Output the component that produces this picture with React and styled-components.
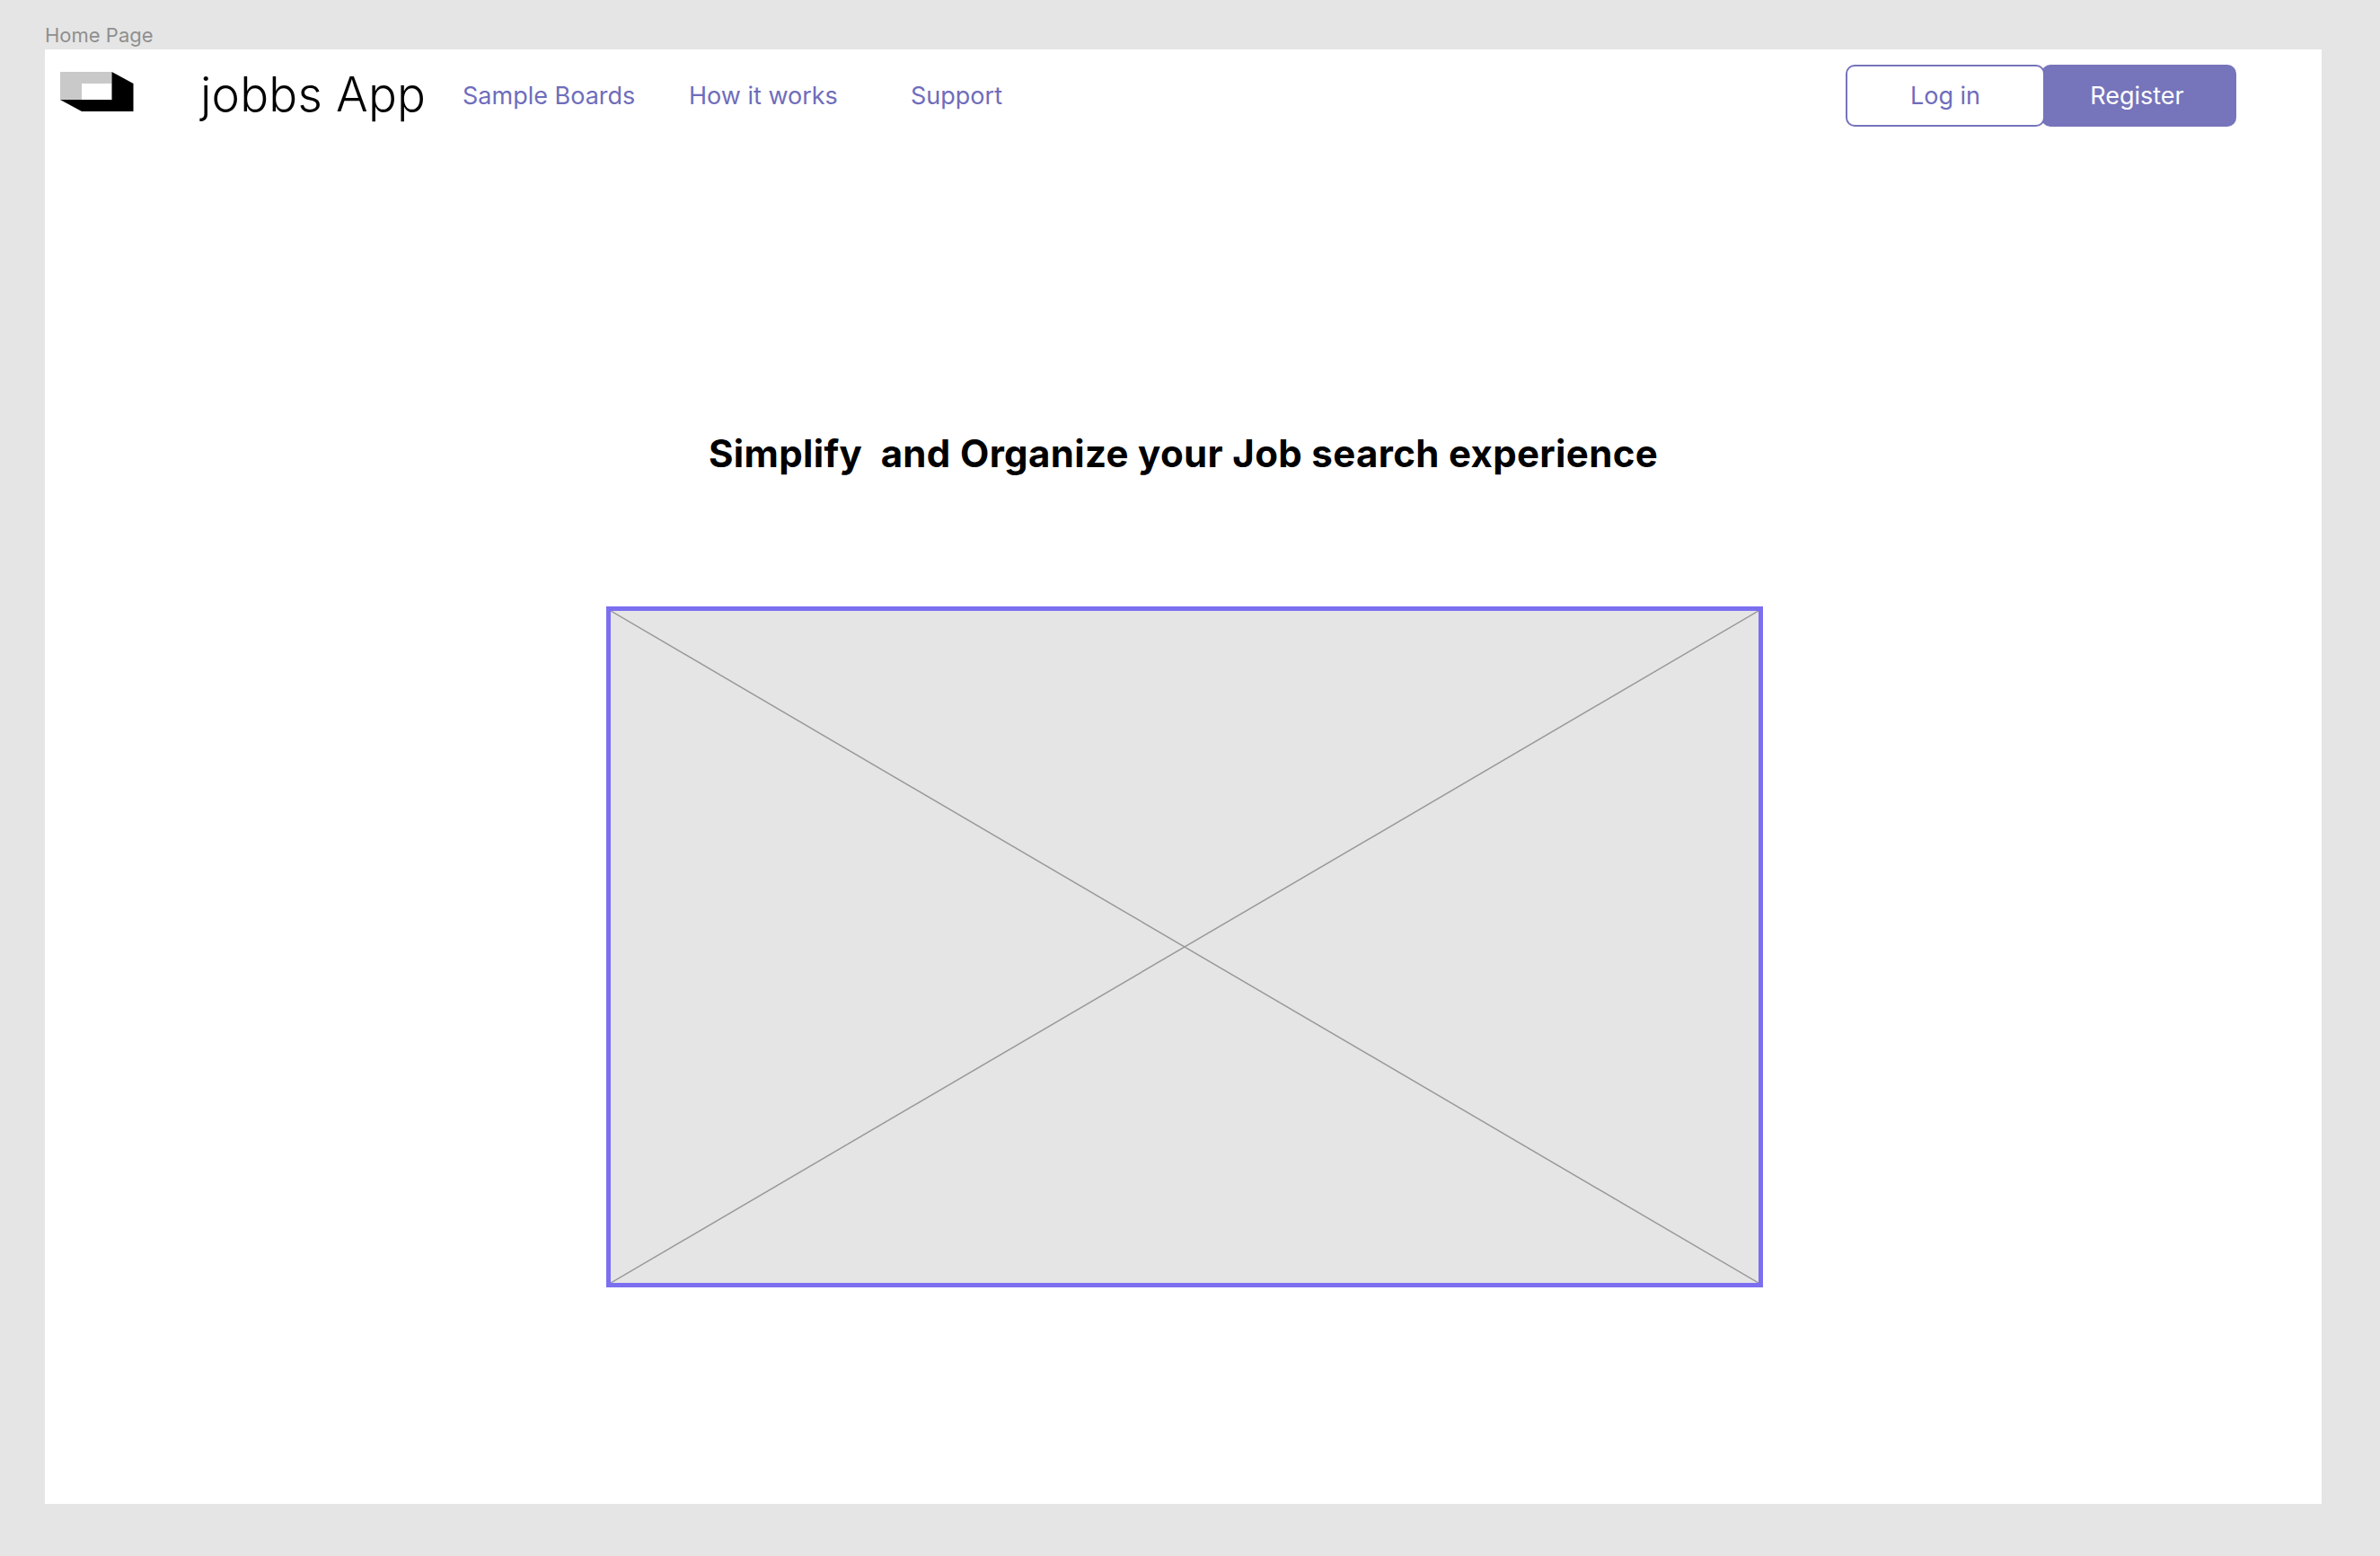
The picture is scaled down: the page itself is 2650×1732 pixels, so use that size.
import React from 'react';
import styled, { createGlobalStyle } from 'styled-components';

const GlobalStyle = createGlobalStyle`
  html, body {
    margin: 0;
    padding: 0;
    background: #e5e5e5;
  }
`;

const Canvas = styled.div`
  width: 2650px;
  height: 1732px;
  padding-left: 50px;
  box-sizing: border-box;
  overflow: hidden;
`;

const FrameLabel = styled.div`
  height: 55px;
  box-sizing: border-box;
  padding-top: 25px;
  font-family: Inter, sans-serif;
  font-size: 22px;
  line-height: 28px;
  color: #8f8f8f;
`;

const Frame = styled.main`
  width: 2535px;
  height: 1619px;
  background: #fff;
  display: flex;
  flex-direction: column;
  align-items: center;
`;

const Navbar = styled.header`
  align-self: stretch;
  display: flex;
  align-items: center;
  height: 69px;
  margin-top: 17px;
  padding-left: 17px;
`;

const LogoMark = styled.svg`
  width: 82px;
  height: 44px;
  flex: none;
  margin-top: -9px;
`;

const Brand = styled.span`
  margin-left: 74px;
  font-family: Inter, sans-serif;
  font-weight: 300;
  font-size: 53px;
  line-height: 60px;
  letter-spacing: 0.2px;
  margin-top: -3px;
  color: #000;
  width: 292px;
  flex: none;
`;

const NavLink = styled.a`
  font-family: Inter, sans-serif;
  font-size: 27px;
  line-height: 32px;
  color: #6f6dbb;
  flex: none;
  width: ${(p) => p.$width}px;
`;

const Actions = styled.div`
  margin-left: auto;
  margin-right: 95px;
  display: flex;
`;

const LoginButton = styled.button`
  position: relative;
  z-index: 1;
  width: 222px;
  height: 69px;
  box-sizing: border-box;
  background: #fff;
  border: 2px solid #7674ba;
  border-radius: 10px;
  font-family: Inter, sans-serif;
  font-size: 27px;
  color: #6f6dbb;
  padding: 0;
`;

const RegisterButton = styled.button`
  width: 217px;
  height: 69px;
  margin-left: -4px;
  padding: 0 4px 0 0;
  box-sizing: border-box;
  background: #7674ba;
  border: none;
  border-radius: 10px;
  font-family: Inter, sans-serif;
  font-size: 27px;
  color: #fff;
`;

const Headline = styled.h1`
  margin: 340px 0 0;
  height: 48px;
  font-family: Inter, sans-serif;
  font-weight: 700;
  font-size: 42px;
  line-height: 48px;
  letter-spacing: 0.34px;
  white-space: pre;
  color: #000;
`;

const Placeholder = styled.div`
  margin-top: 146px;
  margin-left: 3px;
  width: 1288px;
  height: 758px;
  box-sizing: border-box;
  background: #e5e5e5;
  border: 5px solid #7b6ff0;
`;

const CrossLines = styled.svg`
  display: block;
  width: 100%;
  height: 100%;
`;

const App = () => (
  <Canvas>
    <GlobalStyle />
    <FrameLabel>Home Page</FrameLabel>
    <Frame>
      <Navbar>
        <LogoMark viewBox="0 0 82 44">
          <path d="M0 0H57.500V31H24V13H57.500V31H0Z" fill="#c9c9c9" fillRule="evenodd" />
          <path d="M57.500 0L81.500 13V44H24L0 31H57.500Z" fill="#000" />
        </LogoMark>
        <Brand>jobbs App</Brand>
        <NavLink $width={252}>Sample Boards</NavLink>
        <NavLink $width={247}>How it works</NavLink>
        <NavLink $width={200}>Support</NavLink>
        <Actions>
          <LoginButton>Log in</LoginButton>
          <RegisterButton>Register</RegisterButton>
        </Actions>
      </Navbar>
      <Headline>{'Simplify  and Organize your Job search experience'}</Headline>
      <Placeholder>
        <CrossLines viewBox="0 0 1278 748" preserveAspectRatio="none">
          <path d="M0 0L1278 748M1278 0L0 748" stroke="#999" strokeWidth="1.500" fill="none" />
        </CrossLines>
      </Placeholder>
    </Frame>
  </Canvas>
);

export default App;
